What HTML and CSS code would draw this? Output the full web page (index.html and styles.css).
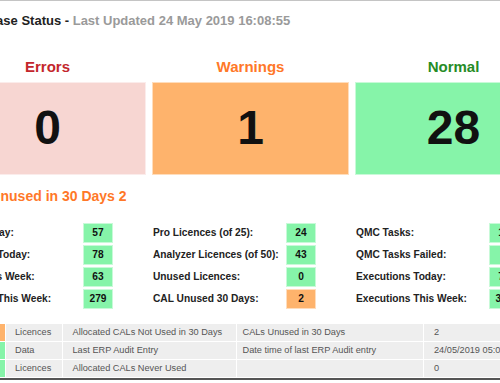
FILE: index.html
```html
<!DOCTYPE html>
<html>
<head>
<meta charset="utf-8">
<link rel="stylesheet" href="styles.css">
</head>
<body>
<div class="topline"></div>
<div class="page">
  <div class="title">Database Status - <span class="updated">Last Updated 24 May 2019 16:08:55</span></div>

  <div class="status">
    <div class="status-col">
      <div class="status-head err">Errors</div>
      <div class="status-box box-err">0</div>
    </div>
    <div class="status-col">
      <div class="status-head warn">Warnings</div>
      <div class="status-box box-warn">1</div>
    </div>
    <div class="status-col">
      <div class="status-head ok">Normal</div>
      <div class="status-box box-ok">28</div>
    </div>
  </div>

  <div class="unused">CAL Unused in 30 Days 2</div>

  <div class="stats">
    <div class="stat-col">
      <div class="stat-row"><span class="stat-label">Users Today:</span><span class="stat-val v-ok">57</span></div>
      <div class="stat-row"><span class="stat-label">Sessions Today:</span><span class="stat-val v-ok">78</span></div>
      <div class="stat-row"><span class="stat-label">Users This Week:</span><span class="stat-val v-ok">63</span></div>
      <div class="stat-row"><span class="stat-label">Sessions This Week:</span><span class="stat-val v-ok">279</span></div>
    </div>
    <div class="stat-col">
      <div class="stat-row"><span class="stat-label">Pro Licences (of 25):</span><span class="stat-val v-ok">24</span></div>
      <div class="stat-row"><span class="stat-label">Analyzer Licences (of 50):</span><span class="stat-val v-ok">43</span></div>
      <div class="stat-row"><span class="stat-label">Unused Licences:</span><span class="stat-val v-ok">0</span></div>
      <div class="stat-row"><span class="stat-label">CAL Unused 30 Days:</span><span class="stat-val v-warn">2</span></div>
    </div>
    <div class="stat-col">
      <div class="stat-row"><span class="stat-label">QMC Tasks:</span><span class="stat-val v-ok">14</span></div>
      <div class="stat-row"><span class="stat-label">QMC Tasks Failed:</span><span class="stat-val v-ok">0</span></div>
      <div class="stat-row"><span class="stat-label">Executions Today:</span><span class="stat-val v-ok">72</span></div>
      <div class="stat-row"><span class="stat-label">Executions This Week:</span><span class="stat-val v-ok">345</span></div>
    </div>
  </div>

  <div class="grid">
    <div class="ind ind-warn"></div>
    <div class="cell c1">Licences</div>
    <div class="cell c2">Allocated CALs Not Used in 30 Days</div>
    <div class="cell c3">CALs Unused in 30 Days</div>
    <div class="cell c4">2</div>

    <div class="ind ind-ok"></div>
    <div class="cell c1">Data</div>
    <div class="cell c2">Last ERP Audit Entry</div>
    <div class="cell c3">Date time of last ERP Audit entry</div>
    <div class="cell c4">24/05/2019 05:02:11</div>

    <div class="ind ind-ok"></div>
    <div class="cell c1">Licences</div>
    <div class="cell c2">Allocated CALs Never Used</div>
    <div class="cell c3"></div>
    <div class="cell c4">0</div>
  </div>
</div>
<div class="bottomline"></div>
</body>
</html>
```

FILE: styles.css
```css
html, body {
  margin: 0;
  padding: 0;
  background: #ffffff;
  overflow: hidden;
}

body {
  width: 500px;
  height: 383px;
  font-family: "Liberation Sans", Arial, sans-serif;
  color: #222222;
}

.topline {
  height: 1px;
  background: #c4c4c4;
}

.page {
  margin-left: -51px;
  width: 620px;
}

.title {
  margin-top: 11.5px;
  padding-left: 11px;
  font-size: 13px;
  line-height: 16px;
  font-weight: bold;
  color: #222222;
  white-space: nowrap;
}

.updated {
  color: #9a9a9a;
}

.status {
  display: grid;
  grid-template-columns: 197px 197px 197px;
  column-gap: 6px;
  margin-top: 29.3px;
}

.status-head {
  font-size: 15px;
  line-height: 18px;
  font-weight: bold;
  text-align: center;
}

.err { color: #c3262c; }
.warn { color: #ff7828; }
.ok { color: #268c26; }

.status-box {
  margin-top: 6.2px;
  height: 93px;
  box-sizing: border-box;
  border: 1px solid rgba(255, 255, 255, 0.55);
  display: flex;
  align-items: center;
  justify-content: center;
  font-size: 48px;
  line-height: 1;
  font-weight: bold;
  color: #111111;
}

.box-err { background: #f7d6d2; }
.box-warn { background: #feb36c; }
.box-ok { background: #86f4a9; }

.unused {
  margin-top: 13.4px;
  padding-left: 9px;
  font-size: 14px;
  line-height: 17px;
  font-weight: bold;
  color: #ff7828;
  white-space: nowrap;
}

.stats {
  display: grid;
  grid-template-columns: 197px 197px 197px;
  column-gap: 6px;
  margin-top: 17.6px;
}

.stat-col {
  display: flex;
  flex-direction: column;
  gap: 2px;
}

.stat-row {
  display: flex;
  align-items: center;
  height: 20px;
  font-size: 10.2px;
  font-weight: bold;
  white-space: nowrap;
}

.stat-label {
  width: 134px;
  padding-left: 1px;
  box-sizing: border-box;
  color: #222222;
}

.stat-val {
  width: 30px;
  height: 20px;
  box-sizing: border-box;
  border: 1px solid rgba(255, 255, 255, 0.55);
  display: flex;
  align-items: center;
  justify-content: center;
  color: #111111;
}

.v-ok { background: #86f4a9; }
.v-warn { background: #feb36c; }

.grid {
  display: grid;
  grid-template-columns: 10px 56px 173px 186px 160px;
  grid-auto-rows: 17px;
  column-gap: 1px;
  row-gap: 1px;
  margin-top: 15.3px;
  margin-left: 46px;
}

.ind-warn { background: #feb36c; }
.ind-ok { background: #86f4a9; }

.cell {
  background: #eeeeee;
  font-size: 9.2px;
  line-height: 17px;
  color: #555555;
  white-space: nowrap;
  overflow: hidden;
}

.c1 { padding-left: 9px; }
.c2 { padding-left: 9.5px; }
.c3 { padding-left: 5.5px; }
.c4 { padding-left: 10px; }

.bottomline {
  margin-top: 1.2px;
  height: 2px;
  background: #555555;
}
```
